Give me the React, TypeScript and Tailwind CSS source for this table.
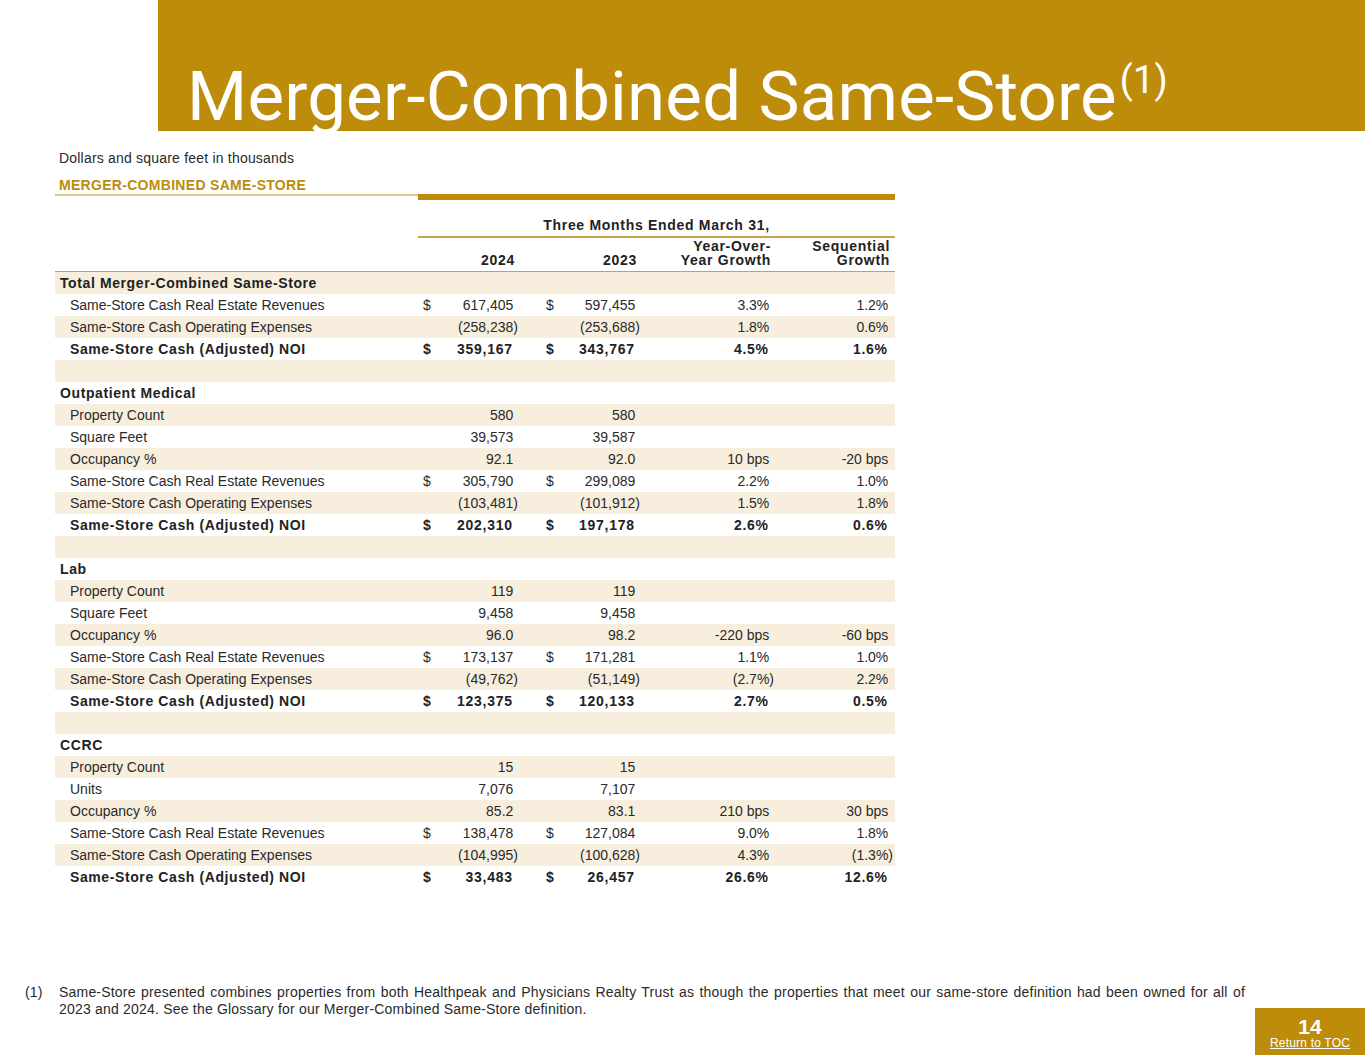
import React from "react";

type Row =
  | { t: "g"; l: string }
  | { t: "e" }
  | {
      t: "i" | "b";
      l: string;
      a?: string;
      ad?: boolean;
      b?: string;
      bd?: boolean;
      c?: string;
      d?: string;
    };

const rows: Row[] = [
  { t: "g", l: "Total Merger-Combined Same-Store" },
  { t: "i", l: "Same-Store Cash Real Estate Revenues", a: "617,405", ad: true, b: "597,455", bd: true, c: "3.3%", d: "1.2%" },
  { t: "i", l: "Same-Store Cash Operating Expenses", a: "(258,238)", b: "(253,688)", c: "1.8%", d: "0.6%" },
  { t: "b", l: "Same-Store Cash (Adjusted) NOI", a: "359,167", ad: true, b: "343,767", bd: true, c: "4.5%", d: "1.6%" },
  { t: "e" },
  { t: "g", l: "Outpatient Medical" },
  { t: "i", l: "Property Count", a: "580", b: "580" },
  { t: "i", l: "Square Feet", a: "39,573", b: "39,587" },
  { t: "i", l: "Occupancy %", a: "92.1", b: "92.0", c: "10 bps", d: "-20 bps" },
  { t: "i", l: "Same-Store Cash Real Estate Revenues", a: "305,790", ad: true, b: "299,089", bd: true, c: "2.2%", d: "1.0%" },
  { t: "i", l: "Same-Store Cash Operating Expenses", a: "(103,481)", b: "(101,912)", c: "1.5%", d: "1.8%" },
  { t: "b", l: "Same-Store Cash (Adjusted) NOI", a: "202,310", ad: true, b: "197,178", bd: true, c: "2.6%", d: "0.6%" },
  { t: "e" },
  { t: "g", l: "Lab" },
  { t: "i", l: "Property Count", a: "119", b: "119" },
  { t: "i", l: "Square Feet", a: "9,458", b: "9,458" },
  { t: "i", l: "Occupancy %", a: "96.0", b: "98.2", c: "-220 bps", d: "-60 bps" },
  { t: "i", l: "Same-Store Cash Real Estate Revenues", a: "173,137", ad: true, b: "171,281", bd: true, c: "1.1%", d: "1.0%" },
  { t: "i", l: "Same-Store Cash Operating Expenses", a: "(49,762)", b: "(51,149)", c: "(2.7%)", d: "2.2%" },
  { t: "b", l: "Same-Store Cash (Adjusted) NOI", a: "123,375", ad: true, b: "120,133", bd: true, c: "2.7%", d: "0.5%" },
  { t: "e" },
  { t: "g", l: "CCRC" },
  { t: "i", l: "Property Count", a: "15", b: "15" },
  { t: "i", l: "Units", a: "7,076", b: "7,107" },
  { t: "i", l: "Occupancy %", a: "85.2", b: "83.1", c: "210 bps", d: "30 bps" },
  { t: "i", l: "Same-Store Cash Real Estate Revenues", a: "138,478", ad: true, b: "127,084", bd: true, c: "9.0%", d: "1.8%" },
  { t: "i", l: "Same-Store Cash Operating Expenses", a: "(104,995)", b: "(100,628)", c: "4.3%", d: "(1.3%)" },
  { t: "b", l: "Same-Store Cash (Adjusted) NOI", a: "33,483", ad: true, b: "26,457", bd: true, c: "26.6%", d: "12.6%" },
];

function Val({ v }: { v?: string }) {
  if (!v) return null;
  const neg = v.endsWith(")");
  return (
    <span className="whitespace-nowrap">
      {v}
      {!neg && <span className="invisible">)</span>}
    </span>
  );
}

export default function App() {
  return (
    <div
      className="w-[1365px] h-[1055px] bg-white flex flex-col overflow-hidden text-[#222]"
      style={{ fontFamily: '"Liberation Sans", Arial, sans-serif' }}
    >
      {/* Header band */}
      <div className="ml-[158px] h-[131px] shrink-0 bg-[#be8c0b] flex items-end pl-[29px]">
        <h1
          className="text-white text-[69px] leading-none font-normal whitespace-nowrap tracking-[0.2px]"
          style={{ fontFamily: 'Roboto, "Liberation Sans", sans-serif' }}
        >
          Merger-Combined Same-Store
          <span className="relative -top-[27px] ml-[3px] text-[38px]">(1)</span>
        </h1>
      </div>

      {/* Content */}
      <div className="pl-[55px]">
        <div className="mt-[19px] pl-[4px] text-[14px] leading-[17px] tracking-[0.2px] text-[#2a2a2a]">
          Dollars and square feet in thousands
        </div>
        <div className="mt-[10px] pl-[4px] text-[14px] leading-[17px] font-bold tracking-[0.3px] text-[#be8c0b]">
          MERGER-COMBINED SAME-STORE
        </div>

        <div className="w-[840px]">
          <div className="flex items-start">
            <div className="w-[363px] h-[2px] bg-[#ddc891]" />
            <div className="flex-1 h-[6px] bg-[#be8c0b]" />
          </div>

          <div className="ml-[363px] pt-[17px] pb-[2px] text-center text-[14px] leading-[17px] font-bold tracking-[0.7px] border-b-2 border-[#c9a24a]">
            Three Months Ended March 31,
          </div>

          <div className="grid grid-cols-[363px_100px_122px_134px_119px] pt-[1px] pb-[4px] border-b-[1.5px] border-[#c9a24a] text-[14px] leading-[14px] font-bold tracking-[0.7px]">
            <div />
            <div className="flex items-end justify-end pr-[3px]">2024</div>
            <div className="flex items-end justify-end pr-[3px]">2023</div>
            <div className="text-right pr-[3px]">
              Year-Over-
              <br />
              Year Growth
            </div>
            <div className="text-right pr-[3px]">
              Sequential
              <br />
              Growth
            </div>
          </div>

          <div>
            {rows.map((r, i) => {
              const shade = i % 2 === 0 ? "bg-[#f7eedd]" : "bg-white";
              if (r.t === "e") return <div key={i} className={`h-[22px] ${shade}`} />;
              if (r.t === "g")
                return (
                  <div
                    key={i}
                    className={`h-[22px] ${shade} flex items-center pl-[5px] text-[14px] leading-none font-bold tracking-[0.6px]`}
                  >
                    {r.l}
                  </div>
                );
              const bold = r.t === "b";
              const tx = bold ? "font-bold tracking-[0.7px]" : "tracking-[0px] text-[#2a2a2a]";
              return (
                <div
                  key={i}
                  className={`h-[22px] ${shade} grid grid-cols-[363px_100px_122px_134px_119px] items-center text-[14px] leading-none ${tx}`}
                >
                  <div className={`pl-[15px] ${bold ? "tracking-[0.6px]" : ""}`}>{r.l}</div>
                  <div className="flex justify-between pl-[5px]">
                    <span>{r.ad ? "$" : ""}</span>
                    <Val v={r.a} />
                  </div>
                  <div className="flex justify-between pl-[28px]">
                    <span>{r.bd ? "$" : ""}</span>
                    <Val v={r.b} />
                  </div>
                  <div className="text-right">
                    <Val v={r.c} />
                  </div>
                  <div className="text-right">
                    <Val v={r.d} />
                  </div>
                </div>
              );
            })}
          </div>
        </div>
      </div>

      {/* Footer */}
      <div className="mt-auto flex items-end justify-between">
        <div className="pl-[25px] pb-[37px] flex text-[14px] leading-[17px] tracking-[0.2px] text-[#2a2a2a]">
          <div className="w-[34px] shrink-0">(1)</div>
          <p className="w-[1186px] text-justify">
            Same-Store presented combines properties from both Healthpeak and Physicians Realty Trust as though the
            properties that meet our same-store definition had been owned for all of 2023 and 2024. See the Glossary
            for our Merger-Combined Same-Store definition.
          </p>
        </div>
        <div className="w-[110px] h-[47px] shrink-0 bg-[#be8c0b] flex flex-col items-center pt-[9px] text-white">
          <div className="text-[21px] leading-[20px] font-bold">14</div>
          <div className="text-[12px] leading-[12px] underline tracking-[0.2px]">Return to TOC</div>
        </div>
      </div>
    </div>
  );
}
